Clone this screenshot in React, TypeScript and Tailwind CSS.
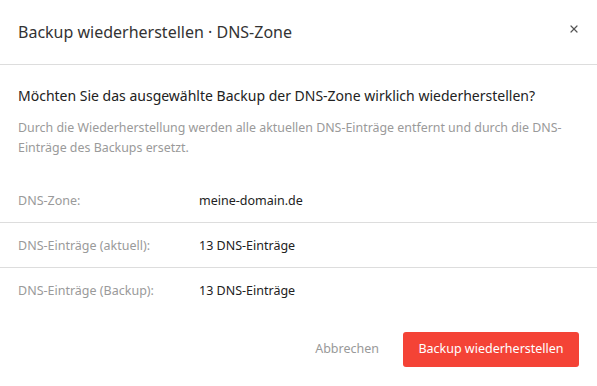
import { X } from 'lucide-react';

const rows = [
    { label: 'DNS-Zone:', value: 'meine-domain.de' },
    { label: 'DNS-Einträge (aktuell):', value: '13 DNS-Einträge' },
    { label: 'DNS-Einträge (Backup):', value: '13 DNS-Einträge' },
];

export default function App() {
    return (
        <div className="w-[597px] h-[386px] bg-white flex flex-col font-['Noto_Sans',sans-serif] text-[#333]">
            <header className="h-[65px] shrink-0 flex items-center justify-between pl-[18px] pr-[18px] border-b border-[#dddddd]">
                <h2 className="text-[16px] leading-5 mt-[-1px]">Backup wiederherstellen · DNS-Zone</h2>
                <button className="text-[#555] mt-[-6px] mr-[-1px]">
                    <X className="h-[12px] w-[12px]" strokeWidth={2.4} />
                </button>
            </header>

            <div className="pt-[21px]">
                <div className="px-[18px]">
                    <p className="text-[14px] leading-5 text-[#222]">
                        Möchten Sie das ausgewählte Backup der DNS-Zone wirklich wiederherstellen?
                    </p>
                    <p className="mt-[12px] text-[12.4px] leading-5 text-[#9a9a9a]">
                        Durch die Wiederherstellung werden alle aktuellen DNS-Einträge entfernt und durch die DNS-Einträge des Backups ersetzt.
                    </p>
                </div>

                <div className="mt-[20px]">
                    {rows.map((r, i) => (
                        <div
                            key={r.label}
                            className={`h-[45px] flex items-center px-[18px] pt-[2px] text-[12.5px] ${i < rows.length - 1 ? 'border-b border-[#dddddd]' : ''}`}
                        >
                            <span className="w-[181px] text-[#9a9a9a]">{r.label}</span>
                            <span className="text-[#222]">{r.value}</span>
                        </div>
                    ))}
                </div>
            </div>

            <div className="mt-[19px] flex items-center justify-end gap-[24px] pr-[18px]">
                <button className="text-[12.5px] text-[#999]">Abbrechen</button>
                <button className="h-[35px] w-[176px] rounded-[3px] bg-[#f44336] text-white text-[12.5px]">
                    Backup wiederherstellen
                </button>
            </div>
        </div>
    );
}
